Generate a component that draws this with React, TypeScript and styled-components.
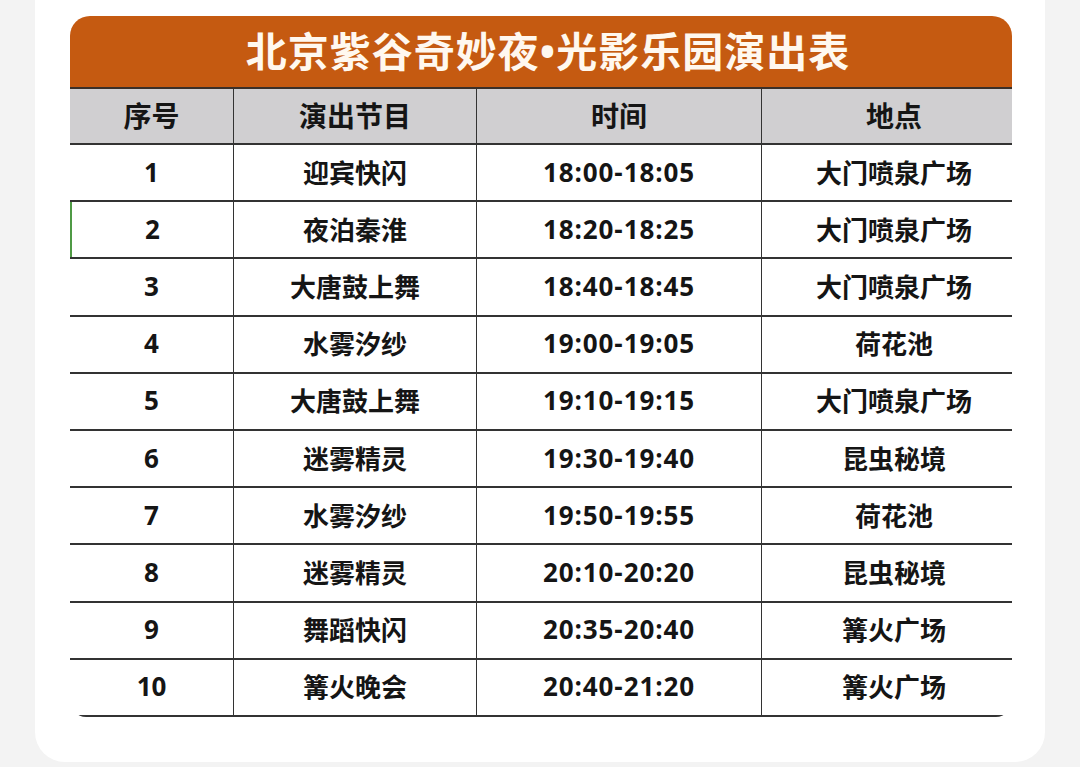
import React from "react";
import styled, { createGlobalStyle } from "styled-components";

/* --- Global --- */

const GlobalStyle = createGlobalStyle`
  html, body {
    margin: 0;
    padding: 0;
    background: #f3f3f3;
  }
  * {
    box-sizing: border-box;
  }
`;

/* --- Styled Components --- */

const Page = styled.div`
  width: 1080px;
  height: 767px;
  padding: 0 35px;
  overflow: hidden;
  font-family: "Open Sans", "Noto Sans CJK SC", sans-serif;
`;

const Card = styled.div`
  height: 762px;
  background: #ffffff;
  border-radius: 0 0 30px 30px;
  padding: 16px 33px 0 35px;
`;

const Sheet = styled.div`
  width: 942px;
  border-radius: 20px 20px 16px 16px;
  overflow: hidden;
  background: #ffffff;
`;

const TitleBar = styled.div`
  height: 73px;
  background: #c55a11;
  border-bottom: 2px solid #3b2f28;
  display: flex;
  align-items: center;
  justify-content: center;
  padding-left: 14px;
  padding-bottom: 5px;
  color: #fff8ef;
  font-size: 41px;
  font-weight: 700;
  letter-spacing: 1px;
`;

const Row = styled.div<{ $head?: boolean }>`
  display: grid;
  grid-template-columns: 164px 243px 285px 264px;
  height: ${(p) => (p.$head ? "56px" : "57.2px")};
  background: ${(p) => (p.$head ? "#d0cfd1" : "#ffffff")};
  border-bottom: 2px solid #333333;
`;

const Cell = styled.div<{ $head?: boolean; $selected?: boolean; $time?: boolean }>`
  display: flex;
  align-items: center;
  justify-content: center;
  font-size: ${(p) => (p.$head ? "28px" : "26px")};
  font-weight: 700;
  letter-spacing: ${(p) => (p.$time ? "0.9px" : "0")};
  color: #151515;
  border-right: 1.5px solid #333333;
  border-left: ${(p) => (p.$selected ? "2px solid #4f9a45" : "none")};
  padding-bottom: 2px;

  &:last-child {
    border-right: none;
  }
`;

/* --- Data --- */

const shows: [string, string, string][] = [
  ["迎宾快闪", "18:00-18:05", "大门喷泉广场"],
  ["夜泊秦淮", "18:20-18:25", "大门喷泉广场"],
  ["大唐鼓上舞", "18:40-18:45", "大门喷泉广场"],
  ["水雾汐纱", "19:00-19:05", "荷花池"],
  ["大唐鼓上舞", "19:10-19:15", "大门喷泉广场"],
  ["迷雾精灵", "19:30-19:40", "昆虫秘境"],
  ["水雾汐纱", "19:50-19:55", "荷花池"],
  ["迷雾精灵", "20:10-20:20", "昆虫秘境"],
  ["舞蹈快闪", "20:35-20:40", "篝火广场"],
  ["篝火晚会", "20:40-21:20", "篝火广场"],
];

/* --- Component --- */

const App: React.FC = () => {
  return (
    <>
      <GlobalStyle />
      <Page>
        <Card>
          <Sheet>
            <TitleBar>北京紫谷奇妙夜•光影乐园演出表</TitleBar>

            <Row $head>
              <Cell $head>序号</Cell>
              <Cell $head>演出节目</Cell>
              <Cell $head>时间</Cell>
              <Cell $head>地点</Cell>
            </Row>

            {shows.map(([name, time, place], i) => (
              <Row key={i}>
                <Cell $selected={i === 1}>{i + 1}</Cell>
                <Cell>{name}</Cell>
                <Cell $time>{time}</Cell>
                <Cell>{place}</Cell>
              </Row>
            ))}
          </Sheet>
        </Card>
      </Page>
    </>
  );
};

export default App;
